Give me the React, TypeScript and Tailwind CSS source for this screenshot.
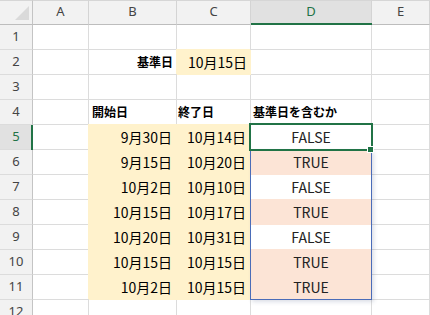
import React from "react";

const cols = ["A", "B", "C", "D", "E"];

type Row = {
  n: number;
  b?: string;
  c?: string;
  d?: string;
  kind?: "label" | "data" | "ref";
};

const rows: Row[] = [
  { n: 1 },
  { n: 2, kind: "ref" },
  { n: 3 },
  { n: 4, kind: "label" },
  { n: 5, b: "9月30日", c: "10月14日", d: "FALSE", kind: "data" },
  { n: 6, b: "9月15日", c: "10月20日", d: "TRUE", kind: "data" },
  { n: 7, b: "10月2日", c: "10月10日", d: "FALSE", kind: "data" },
  { n: 8, b: "10月15日", c: "10月17日", d: "TRUE", kind: "data" },
  { n: 9, b: "10月20日", c: "10月31日", d: "FALSE", kind: "data" },
  { n: 10, b: "10月15日", c: "10月15日", d: "TRUE", kind: "data" },
  { n: 11, b: "10月2日", c: "10月15日", d: "TRUE", kind: "data" },
  { n: 12 },
];

const base =
  "h-[25px] border-r border-b border-[#dcdcdc] flex items-center overflow-visible whitespace-nowrap";
const yellow =
  "bg-[#fff2cc] border-[#fff2cc] shadow-[-1px_-1px_0_0_#fff2cc]";
const pink = "bg-[#fce4d6] border-[#fce4d6] shadow-[-1px_-1px_0_0_#fce4d6]";
const dataFont = "text-[14px] text-black";
const labelFont = "text-[12px] font-bold text-black";

function RowHeader({ n }: { n: number }) {
  const active = n === 5;
  return (
    <div
      className={
        "relative h-[25px] border-r border-b border-r-[#c4c4c4] border-b-[#dcdcdc] flex items-center justify-center text-[13px] " +
        (active ? "bg-[#e1e1e1] text-[#217346]" : "bg-[#f2f2f2] text-[#444444]")
      }
      style={{ fontFamily: "'Noto Sans', sans-serif" }}
    >
      {n}
      {active && (
        <div className="absolute right-[-1px] top-0 bottom-[-1px] w-[2px] bg-[#217346]" />
      )}
    </div>
  );
}

export default function App() {
  return (
    <div
      className="relative w-[430px] h-[315px] overflow-hidden bg-white"
      style={{ fontFamily: "'Noto Sans CJK JP', 'Noto Sans', sans-serif" }}
    >
      <div className="grid grid-cols-[33px_56px_88px_74px_121px_1fr]">
        {/* header row */}
        <div className="relative h-[25px] bg-[#f2f2f2] border-t border-[#d6d6d6] border-r border-r-[#c4c4c4] border-b border-b-[#bdbdbd]">
          <svg
            className="absolute left-[15px] top-[5px]"
            width="14"
            height="14"
            viewBox="0 0 14 14"
          >
            <polygon points="14,0 14,14 0,14" fill="#dadada" />
          </svg>
        </div>
        {cols.map((c) => {
          const active = c === "D";
          return (
            <div
              key={c}
              className={
                "relative h-[25px] border-t border-t-[#d6d6d6] border-r border-r-[#d4d4d4] border-b border-b-[#bdbdbd] flex justify-center pt-[1px] text-[13px] leading-[18px] " +
                (active ? "bg-[#e1e1e1] text-[#217346]" : "bg-[#f2f2f2] text-[#444444]")
              }
              style={{ fontFamily: "'Noto Sans', sans-serif" }}
            >
              {c}
              {active && (
                <div className="absolute left-0 right-[-1px] bottom-[-1px] h-[2px] bg-[#217346]" />
              )}
            </div>
          );
        })}

        {rows.map((r) => {
          const isData = r.kind === "data";
          const dPink = isData && r.d === "TRUE";
          return (
            <React.Fragment key={r.n}>
              <RowHeader n={r.n} />
              {/* A */}
              <div className={base} />
              {/* B */}
              {r.kind === "ref" ? (
                <div className={base + " justify-end pr-[3px] " + labelFont}>
                  基準日
                </div>
              ) : r.kind === "label" ? (
                <div className={base + " pl-[3px] " + labelFont}>開始日</div>
              ) : isData ? (
                <div className={base + " justify-end pr-[4px] " + yellow + " " + dataFont}>
                  {r.b}
                </div>
              ) : (
                <div className={base} />
              )}
              {/* C */}
              {r.kind === "ref" ? (
                <div className={base + " justify-end pr-[3px] " + yellow + " " + dataFont}>
                  10月15日
                </div>
              ) : r.kind === "label" ? (
                <div className={base + " pl-[1px] " + labelFont}>終了日</div>
              ) : isData ? (
                <div className={base + " justify-end pr-[4px] " + yellow + " " + dataFont}>
                  {r.c}
                </div>
              ) : (
                <div className={base} />
              )}
              {/* D */}
              {r.kind === "label" ? (
                <div className={base + " pl-[2px] " + labelFont}>基準日を含むか</div>
              ) : isData ? (
                <div
                  className={
                    base +
                    " justify-center text-[14px] text-[#222222] " +
                    (dPink ? pink : "")
                  }
                >
                  {r.d}
                </div>
              ) : (
                <div className={base} />
              )}
              {/* E */}
              <div className={base} />
            </React.Fragment>
          );
        })}
      </div>

      {/* range border D6:D11 */}
      <div className="absolute left-[250px] top-[150px] w-[122px] h-[150px] border border-[#4a6cb8] shadow-[2px_2px_4px_rgba(60,80,120,0.18)]" />
      {/* active cell D5 */}
      <div className="absolute left-[249px] top-[123px] w-[124px] h-[28px] border-2 border-[#217346]" />
      {/* fill handle */}
      <div className="absolute left-[367px] top-[146px] w-[7px] h-[7px] bg-[#217346] border border-white" />
    </div>
  );
}
